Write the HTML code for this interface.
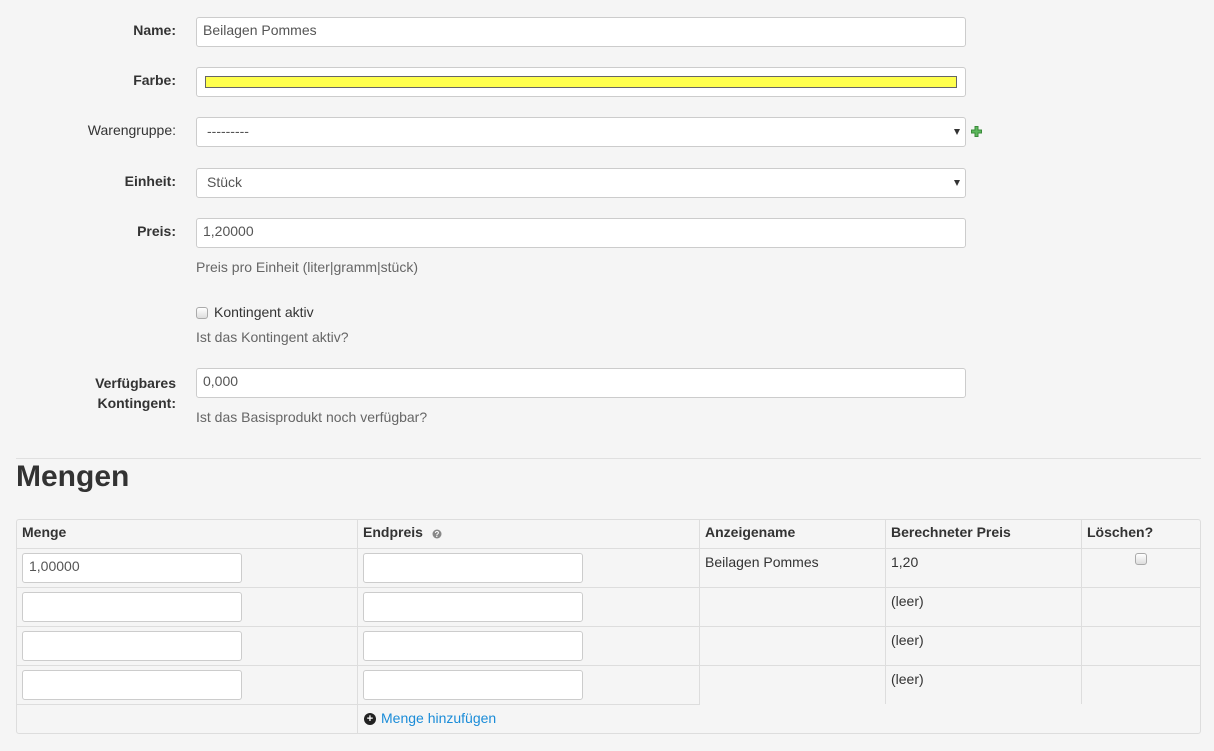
<!DOCTYPE html>
<html><head><meta charset="utf-8">
<style>
*{box-sizing:border-box;margin:0;padding:0}
body{width:1214px;height:751px;background:#f5f5f5;font-family:"Liberation Sans",sans-serif;font-size:14px;color:#333;position:relative;overflow:hidden}
.a{position:absolute}
.lbl{position:absolute;right:1038px;text-align:right;white-space:nowrap}
.b{font-weight:bold}
.inp{position:absolute;background:#fff;border:1px solid #ccc;border-radius:3px;height:30px;color:#555;padding:4px 6px 6px;line-height:16px}
.sel{padding-top:5px}
.help{position:absolute;left:196px;color:#666}
.caret{position:absolute;right:5px;top:11px;width:0;height:0;border-left:3px solid transparent;border-right:3px solid transparent;border-top:6px solid #333}
.hl{position:absolute;height:1px;background:#ddd}
.vl{position:absolute;width:1px;background:#ddd}
.th{position:absolute;top:524px;font-weight:bold}
.cb{position:absolute;width:12px;height:12px;border:1px solid #aaa;border-radius:3px;background:linear-gradient(#fff,#ddd)}
</style></head><body>

<div class="lbl b" style="top:22px">Name:</div>
<div class="inp" style="left:196px;top:17px;width:770px">Beilagen Pommes</div>

<div class="lbl b" style="top:72px">Farbe:</div>
<div class="inp" style="left:196px;top:67px;width:770px"></div>
<div class="a" style="left:205px;top:76px;width:752px;height:12px;background:#ffff4d;border:1px solid #666"></div>

<div class="lbl" style="top:122px">Warengruppe:</div>
<div class="inp sel" style="left:196px;top:117px;width:770px;padding-left:10px">---------<div class="caret"></div></div>
<svg class="a" style="left:971px;top:126px" width="11" height="11" viewBox="0 0 11 11"><path d="M4 0.5h3v3.5h3.5v3h-3.5v3.5h-3v-3.5h-3.5v-3h3.5z" fill="#5cb85c" stroke="#3a8a3a" stroke-width="1"/></svg>

<div class="lbl b" style="top:173px">Einheit:</div>
<div class="inp sel" style="left:196px;top:168px;width:770px;padding-left:10px">Stück<div class="caret"></div></div>

<div class="lbl b" style="top:223px">Preis:</div>
<div class="inp" style="left:196px;top:218px;width:770px">1,20000</div>
<div class="help" style="top:259px">Preis pro Einheit (liter|gramm|stück)</div>

<div class="cb" style="left:196px;top:307px"></div>
<div class="a" style="left:214px;top:304px">Kontingent aktiv</div>
<div class="help" style="top:329px">Ist das Kontingent aktiv?</div>

<div class="lbl b" style="top:373px;line-height:20px">Verfügbares<br>Kontingent:</div>
<div class="inp" style="left:196px;top:368px;width:770px">0,000</div>
<div class="help" style="top:409px">Ist das Basisprodukt noch verfügbar?</div>

<div class="hl" style="left:16px;top:458px;width:1185px;background:#e0e0e0"></div>
<div class="a b" style="left:16px;top:458px;font-size:30px;line-height:38px">Mengen</div>

<div class="a" style="left:16px;top:519px;width:1185px;height:215px;border:1px solid #ddd;border-radius:3px"></div>
<div class="hl" style="left:17px;top:548px;width:1183px"></div>
<div class="hl" style="left:17px;top:587px;width:1183px"></div>
<div class="hl" style="left:17px;top:626px;width:1183px"></div>
<div class="hl" style="left:17px;top:665px;width:1183px"></div>
<div class="hl" style="left:17px;top:704px;width:683px"></div>
<div class="vl" style="left:357px;top:520px;height:213px"></div>
<div class="vl" style="left:699px;top:520px;height:184px"></div>
<div class="vl" style="left:885px;top:520px;height:184px"></div>
<div class="vl" style="left:1081px;top:520px;height:184px"></div>

<div class="th" style="left:22px">Menge</div>
<div class="th" style="left:363px">Endpreis</div>
<svg class="a" style="left:432px;top:529px" width="10" height="10" viewBox="0 0 10 10"><circle cx="5" cy="5" r="4.5" fill="#888"/><text x="5" y="8" font-size="8" font-weight="bold" fill="#fff" text-anchor="middle" font-family="Liberation Sans">?</text></svg>
<div class="th" style="left:705px">Anzeigename</div>
<div class="th" style="left:891px">Berechneter Preis</div>
<div class="th" style="left:1087px">Löschen?</div>

<div class="inp" style="left:22px;top:553px;width:220px">1,00000</div>
<div class="inp" style="left:363px;top:553px;width:220px"></div>
<div class="inp" style="left:22px;top:592px;width:220px"></div>
<div class="inp" style="left:363px;top:592px;width:220px"></div>
<div class="inp" style="left:22px;top:631px;width:220px"></div>
<div class="inp" style="left:363px;top:631px;width:220px"></div>
<div class="inp" style="left:22px;top:670px;width:220px"></div>
<div class="inp" style="left:363px;top:670px;width:220px"></div>

<div class="a" style="left:705px;top:554px">Beilagen Pommes</div>
<div class="a" style="left:891px;top:554px">1,20</div>
<div class="cb" style="left:1135px;top:553px"></div>
<div class="a" style="left:891px;top:593px">(leer)</div>
<div class="a" style="left:891px;top:632px">(leer)</div>
<div class="a" style="left:891px;top:671px">(leer)</div>

<div class="a" style="left:364px;top:713px;width:12px;height:12px;border-radius:50%;background:#222;color:#fff;font-size:11px;line-height:12px;text-align:center;font-weight:bold">+</div>
<div class="a" style="left:381px;top:710px;color:#1a8cd8">Menge hinzufügen</div>
</body></html>
